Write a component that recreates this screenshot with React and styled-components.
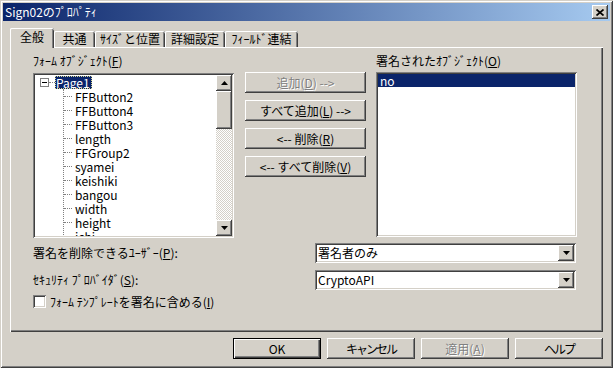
import React from "react";
import styled, { createGlobalStyle, css } from "styled-components";

const FACE = "#d4d0c8";
const SEL = "#0a246a";

const GlobalStyle = createGlobalStyle`
  html, body { margin: 0; padding: 0; background: ${FACE}; }
  body { font-family: "Noto Sans CJK JP", "Liberation Sans", sans-serif; font-size: 12px; }
`;

const raised = css`
  background: ${FACE};
  box-shadow: inset -1px -1px #404040, inset 1px 1px #fff, inset -2px -2px #808080, inset 2px 2px ${FACE};
`;
const sunken = css`
  box-shadow: inset 1px 1px #808080, inset -1px -1px #fff, inset 2px 2px #404040, inset -2px -2px ${FACE};
`;

const Window = styled.div`
  width: 613px;
  height: 368px;
  box-sizing: border-box;
  padding: 3px;
  background: ${FACE};
  box-shadow: inset 1px 1px ${FACE}, inset -1px -1px #404040, inset 2px 2px #fff, inset -2px -2px #808080;
  display: flex;
  flex-direction: column;
  font-family: "Noto Sans CJK JP", "Liberation Sans", sans-serif;
  font-size: 12px;
  color: #000;
  overflow: hidden;
`;

const TitleBar = styled.div`
  height: 18px;
  flex: none;
  display: flex;
  align-items: center;
  justify-content: space-between;
  padding: 0 2px 0 2px;
  background: linear-gradient(to right, #0a246a, #a6caf0);
`;

const TitleText = styled.span`
  color: #fff;
  line-height: 18px;
  white-space: nowrap;
`;

const CloseBtn = styled.div`
  width: 16px;
  height: 14px;
  ${raised};
  display: flex;
  align-items: center;
  justify-content: center;
`;

const Body = styled.div`
  padding: 7px 7px 0;
  display: flex;
  flex-direction: column;
`;

const TabStrip = styled.div`
  display: flex;
  align-items: flex-end;
  height: 19px;
`;

const Tab = styled.div`
  width: ${(p) => p.w}px;
  height: ${(p) => (p.active ? 20 : 16)}px;
  margin-bottom: ${(p) => (p.active ? -1 : 0)}px;
  box-sizing: border-box;
  position: relative;
  z-index: ${(p) => (p.active ? 2 : 1)};
  background: ${FACE};
  border-radius: 2px 2px 0 0;
  box-shadow: inset 1px 0 #fff, inset 0 1px #fff, inset -1px 0 #404040, inset -2px 0 #808080;
  display: flex;
  align-items: center;
  justify-content: center;
  padding-bottom: ${(p) => (p.active ? 2 : 0)}px;
  white-space: nowrap;
  line-height: 14px;
`;

const Panel = styled.div`
  height: 285px;
  box-sizing: border-box;
  padding: 7px 0 0 23px;
  background: ${FACE};
  box-shadow: inset 1px 1px #fff, inset -1px -1px #404040, inset -2px -2px #808080;
  display: flex;
  flex-direction: column;
`;

const TopArea = styled.div`
  display: flex;
`;

const Column = styled.div`
  width: ${(p) => p.w}px;
  margin-left: ${(p) => p.ml || 0}px;
  padding-top: ${(p) => p.pt || 0}px;
  display: flex;
  flex-direction: column;
  gap: ${(p) => p.gap || 0}px;
`;

const Label = styled.div`
  height: ${(p) => p.h || 19}px;
  line-height: 14px;
  white-space: nowrap;
`;

const Mn = styled.span`
  text-decoration: underline;
`;

const TreeBox = styled.div`
  height: 165px;
  box-sizing: border-box;
  padding: 2px;
  background: #fff;
  ${sunken};
  display: flex;
`;

const TreeContent = styled.div`
  flex: 1;
  overflow: hidden;
`;

const RootRow = styled.div`
  height: 14px;
  display: flex;
  align-items: center;
  padding-left: 5px;
`;

const Expander = styled.div`
  width: 9px;
  height: 9px;
  box-sizing: border-box;
  border: 1px solid #808080;
  background: #fff;
  display: flex;
  align-items: center;
  justify-content: center;
  &::after {
    content: "";
    width: 5px;
    height: 1px;
    background: #000;
  }
`;

const Connector = styled.div`
  width: 6px;
  border-top: 1px dotted #808080;
`;

const SelectedNode = styled.span`
  background: ${SEL};
  color: #fff;
  height: 13px;
  line-height: 13px;
  padding: 0 2px 0 1px;
  outline: 1px dotted #d8d890;
  outline-offset: -1px;
`;

const Children = styled.div`
  margin-left: 28px;
  border-left: 1px dotted #808080;
`;

const ChildRow = styled.div`
  height: 14px;
  display: flex;
  align-items: center;
  line-height: 13px;
  white-space: nowrap;
  &::before {
    content: "";
    width: 8px;
    margin-right: 3px;
    border-top: 1px dotted #808080;
  }
`;

const ScrollBar = styled.div`
  width: 16px;
  display: flex;
  flex-direction: column;
`;

const ScrollBtn = styled.div`
  width: 16px;
  height: ${(p) => p.h || 16}px;
  flex: none;
  ${raised};
  display: flex;
  align-items: center;
  justify-content: center;
`;

const Track = styled.div`
  flex: 1;
  background: repeating-conic-gradient(${FACE} 0 25%, #fff 0 50%) 0 0 / 2px 2px;
`;

const MidButton = styled.div`
  width: 121px;
  height: 21px;
  ${raised};
  display: flex;
  align-items: center;
  justify-content: center;
  white-space: nowrap;
  line-height: 14px;
  color: ${(p) => (p.disabled ? "#808080" : "#000")};
  text-shadow: ${(p) => (p.disabled ? "1px 1px #fff" : "none")};
`;

const ListBox = styled.div`
  height: 165px;
  box-sizing: border-box;
  padding: 2px;
  background: #fff;
  ${sunken};
`;

const ListRow = styled.div`
  height: 13px;
  line-height: 13px;
  padding-left: 2px;
  background: ${SEL};
  color: #fff;
`;

const FieldRow = styled.div`
  display: flex;
  align-items: center;
  margin-top: ${(p) => p.mt}px;
  height: 20px;
`;

const FieldLabel = styled.div`
  width: 282px;
  line-height: 14px;
  white-space: nowrap;
`;

const Combo = styled.div`
  width: 261px;
  height: 20px;
  box-sizing: border-box;
  padding: 2px;
  background: #fff;
  ${sunken};
  display: flex;
`;

const ComboText = styled.div`
  flex: 1;
  padding-left: 1px;
  line-height: 16px;
  white-space: nowrap;
`;

const CheckRow = styled.div`
  display: flex;
  align-items: center;
  margin-top: 5px;
  height: 13px;
`;

const CheckBox = styled.div`
  width: 13px;
  height: 13px;
  flex: none;
  background: #fff;
  ${sunken};
  margin-right: 4px;
`;

const CheckLabel = styled.span`
  line-height: 14px;
  white-space: nowrap;
`;

const Footer = styled.div`
  display: flex;
  justify-content: flex-end;
  gap: 6px;
  padding-top: 6px;
`;

const DlgButton = styled.div`
  width: 88px;
  height: 21px;
  box-sizing: border-box;
  display: flex;
  align-items: center;
  justify-content: center;
  line-height: 14px;
  white-space: nowrap;
  letter-spacing: ${(p) => (p.tight ? "-2px" : "0")};
  background: ${FACE};
  color: ${(p) => (p.disabled ? "#808080" : "#000")};
  text-shadow: ${(p) => (p.disabled ? "1px 1px #fff" : "none")};
  ${(p) =>
    p.primary
      ? css`
          border: 1px solid #000;
          box-shadow: inset 1px 1px #fff, inset -1px -1px #404040, inset -2px -2px #808080;
        `
      : css`
          box-shadow: inset -1px -1px #404040, inset 1px 1px #fff, inset -2px -2px #808080, inset 2px 2px ${FACE};
        `}
`;

const Arrow = ({ dir }) => (
  <svg width="7" height="4" viewBox="0 0 7 4" style={{ display: "block" }}>
    <polygon points={dir === "up" ? "3.5,0 7,4 0,4" : "0,0 7,0 3.5,4"} fill="#000" />
  </svg>
);

const CloseGlyph = () => (
  <svg width="8" height="7" viewBox="0 0 8 7" style={{ display: "block" }}>
    <path d="M0.5 0.5L7.5 6.5M7.5 0.5L0.5 6.5" stroke="#000" strokeWidth="1.7" />
  </svg>
);

const children = [
  "FFButton2",
  "FFButton4",
  "FFButton3",
  "length",
  "FFGroup2",
  "syamei",
  "keishiki",
  "bangou",
  "width",
  "height",
  "ichi",
];

const tabs = [
  { t: "全般", w: 44 },
  { t: "共通", w: 41 },
  { t: "ｻｲｽﾞと位置", w: 70 },
  { t: "詳細設定", w: 60 },
  { t: "ﾌｨｰﾙﾄﾞ連結", w: 73 },
];

export default function App() {
  return (
    <>
      <GlobalStyle />
      <Window>
        <TitleBar>
          <TitleText>Sign02のﾌﾟﾛﾊﾟﾃｨ</TitleText>
          <CloseBtn>
            <CloseGlyph />
          </CloseBtn>
        </TitleBar>
        <Body>
          <TabStrip>
            {tabs.map((tab, i) => (
              <Tab key={tab.t} w={tab.w} active={i === 0}>
                {tab.t}
              </Tab>
            ))}
          </TabStrip>
          <Panel>
            <TopArea>
              <Column w={201}>
                <Label>
                  ﾌｫｰﾑ ｵﾌﾞｼﾞｪｸﾄ(<Mn>F</Mn>)
                </Label>
                <TreeBox>
                  <TreeContent>
                    <RootRow>
                      <Expander />
                      <Connector />
                      <SelectedNode>Page1</SelectedNode>
                    </RootRow>
                    <Children>
                      {children.map((c) => (
                        <ChildRow key={c}>{c}</ChildRow>
                      ))}
                    </Children>
                  </TreeContent>
                  <ScrollBar>
                    <ScrollBtn>
                      <Arrow dir="up" />
                    </ScrollBtn>
                    <ScrollBtn h={38} />
                    <Track />
                    <ScrollBtn>
                      <Arrow dir="down" />
                    </ScrollBtn>
                  </ScrollBar>
                </TreeBox>
              </Column>
              <Column w={121} ml={11} pt={18} gap={7}>
                <MidButton disabled>
                  追加(<Mn>D</Mn>) --&gt;
                </MidButton>
                <MidButton>
                  すべて追加(<Mn>L</Mn>) --&gt;
                </MidButton>
                <MidButton>
                  &lt;-- 削除(<Mn>R</Mn>)
                </MidButton>
                <MidButton>
                  &lt;-- すべて削除(<Mn>V</Mn>)
                </MidButton>
              </Column>
              <Column w={201} ml={10}>
                <Label h={18}>
                  署名されたｵﾌﾞｼﾞｪｸﾄ(<Mn>O</Mn>)
                </Label>
                <ListBox>
                  <ListRow>no</ListRow>
                </ListBox>
              </Column>
            </TopArea>
            <FieldRow mt={5}>
              <FieldLabel>
                署名を削除できるﾕｰｻﾞｰ(<Mn>P</Mn>):
              </FieldLabel>
              <Combo>
                <ComboText>署名者のみ</ComboText>
                <ScrollBtn>
                  <Arrow dir="down" />
                </ScrollBtn>
              </Combo>
            </FieldRow>
            <FieldRow mt={7}>
              <FieldLabel>
                ｾｷｭﾘﾃｨ ﾌﾟﾛﾊﾞｲﾀﾞ(<Mn>S</Mn>):
              </FieldLabel>
              <Combo>
                <ComboText>CryptoAPI</ComboText>
                <ScrollBtn>
                  <Arrow dir="down" />
                </ScrollBtn>
              </Combo>
            </FieldRow>
            <CheckRow>
              <CheckBox />
              <CheckLabel>
                ﾌｫｰﾑ ﾃﾝﾌﾟﾚｰﾄを署名に含める(<Mn>I</Mn>)
              </CheckLabel>
            </CheckRow>
          </Panel>
          <Footer>
            <DlgButton primary>OK</DlgButton>
            <DlgButton tight>キャンセル</DlgButton>
            <DlgButton disabled>
              適用(<Mn>A</Mn>)
            </DlgButton>
            <DlgButton tight>ヘルプ</DlgButton>
          </Footer>
        </Body>
      </Window>
    </>
  );
}
